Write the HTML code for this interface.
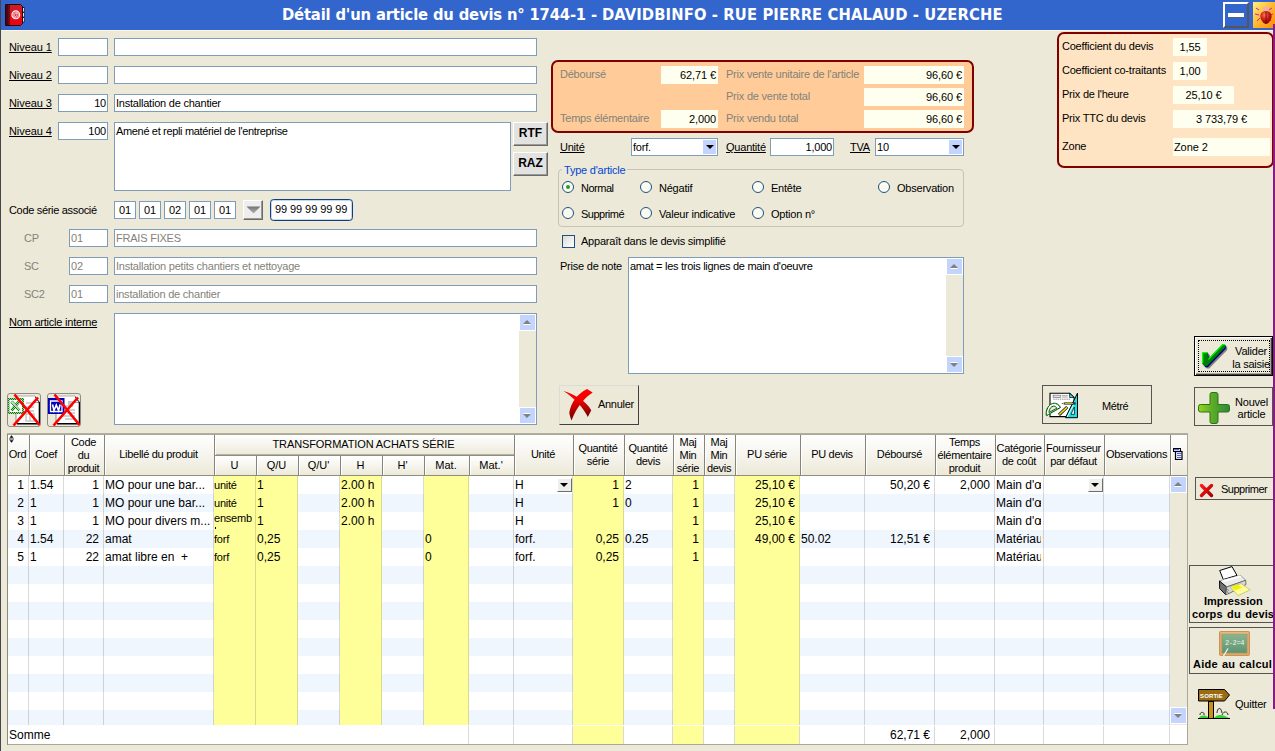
<!DOCTYPE html>
<html lang="fr"><head><meta charset="utf-8"><title>Détail d'un article du devis</title>
<style>
html,body{margin:0;padding:0}
body{width:1275px;height:751px;overflow:hidden;position:relative;background:#ECE9D8;font-family:"Liberation Sans",sans-serif;font-size:11px;letter-spacing:-0.22px;color:#000}
div,span,i,b,svg{position:absolute;box-sizing:border-box}
span.t{white-space:nowrap;line-height:13px}
.u{text-decoration:underline}
.g{color:#84827a}
#tb{left:0;top:0;width:1275px;height:30px;background:#3366CC}
#tb2{left:1px;top:30px;width:1274px;height:1px;background:#FBF8E6}
#tt{left:282px;top:0;color:#fff;font-family:"DejaVu Sans Condensed","DejaVu Sans","Liberation Sans",sans-serif;font-weight:bold;font-size:16.4px;letter-spacing:-0.15px;line-height:29px;white-space:nowrap}
#tt b{position:static;letter-spacing:0.13px}
#lb{left:0;top:0;width:1px;height:751px;background:#45464a}
#pl{left:1273px;top:24px;width:2px;height:685px;background:#8B1A89}
.in{border:1px solid #7F9DB9;background:#fff;height:18px;line-height:16px;padding:0 1px;white-space:nowrap;overflow:hidden}
.in.r{text-align:right}
.in.g{color:#84827a}
.ta{border:1px solid #7F9DB9;background:#fff;padding:1px 1px;line-height:14px;white-space:nowrap;overflow:hidden}
.btn{border:1px solid #fff;border-right-color:#404040;border-bottom-color:#404040;background:#ECE9D8;box-shadow:inset -1px -1px 0 #ACA899}
.btn.gb{background:#E2E2E0;border-right-color:#6a6a6a;border-bottom-color:#6a6a6a;box-shadow:inset -1px -1px 0 #9a9a96}
.fb{border:1px solid #55554f;background:#ECE9D8}
.pn{border:2px solid #800000;border-radius:7px}
.iv{background:#FFFFF0;height:18px;line-height:19px;text-align:right;padding:0 2px;font-size:11px;letter-spacing:-0.1px;white-space:nowrap}
.rd{width:12px;height:12px;border-radius:50%;border:1px solid #1C5180;background:#FBFBF2}
.rd.on:after{content:"";position:absolute;left:3px;top:3px;width:4px;height:4px;border-radius:50%;background:#21A121}
.sb{background:#ECE9D8}
.sa{background:#fff;width:17px;height:17px}
.sa:before{content:"";position:absolute;left:1px;top:1px;width:15px;height:15px;background:#C3D5FD}
.sa i{left:4px;width:0;height:0;border:4px solid transparent}
.sa i.up{top:6px;border-bottom:4.5px solid #808080;border-top:0;filter:drop-shadow(0 1px 0 #fff)}
.sa i.dn{top:7px;border-top:4.5px solid #808080;border-bottom:0;filter:drop-shadow(0 -1px 0 #fff)}
/* grid */
#grid{left:8px;top:434px;width:1180px;height:311px;background:#fff;border-right:1px solid #ACA899;border-bottom:1px solid #ACA899;overflow:hidden}
#gl{left:7px;top:434px;width:1px;height:311px;background:#8e8b7c}
#grid:before{content:"";position:absolute;left:0;top:0;width:100%;height:1px;background:#aaa796;z-index:5}
#gt{left:7px;top:433px;width:1181px;height:1px;background:#b3b09f}
.rw{left:0;width:1162px;background:#fff}
.rb{left:0;width:1162px;background:#EFF6FD}
.yc{top:42px;height:249px;background:#FFFF99}
.yc2{top:292px;height:18px;background:#FFFF99}
.vl{top:42px;width:1px;height:249px;background:rgba(120,120,120,.28)}
.vl2{top:292px;width:1px;height:18px;background:rgba(120,120,120,.28)}
.sumrow{left:0;top:291px;width:1179px;height:19px;background:#fff}
.hc{top:0;background:linear-gradient(#fff 0%,#F7F6F0 45%,#ECE9D8 100%);border-right:1px solid #85857c;border-bottom:1px solid #8e8d82;box-shadow:inset 1px 1px 0 #fff}
.hc span{left:-1px;right:1px;letter-spacing:-0.3px;text-align:center;line-height:13px;white-space:nowrap}
.ico{display:block}
.c{font-size:12px;letter-spacing:0;line-height:18px;height:18px;padding:0 1px;white-space:nowrap;overflow:hidden}
.c.r{text-align:right;padding-right:4px}
.c.s{font-size:11px;letter-spacing:-0.22px;padding-left:0}
.cb{width:15px;height:14px;background:#EEEEEC;border:1px solid #fff;border-right-color:#6e6e6e;border-bottom-color:#6e6e6e}
.cb i{left:2px;top:4px;width:0;height:0;border:4.5px solid transparent;border-top:4.5px solid #000;border-bottom:0}
.sbt{background:#ECE9D8}
.sbb{width:17px;height:17px;background:#fff}
.sbb:before{content:"";position:absolute;left:1px;top:1px;width:15px;height:15px;background:#C3D5FD}
.sbb i{left:4px;width:0;height:0;border:4px solid transparent}
.sbb i.up{top:6px;border-bottom:4.5px solid #808080;border-top:0;filter:drop-shadow(0 1px 0 #fff)}
.sbb i.dn{top:7px;border-top:4.5px solid #808080;border-bottom:0;filter:drop-shadow(0 -1px 0 #fff)}
.bt{font-weight:bold;font-size:11px;letter-spacing:0;text-align:center;white-space:nowrap;line-height:13px}

.ca{right:1px;top:1px;width:13px;height:14px;background:#C3D5FD}
.ca i{left:2.5px;top:4.5px;width:0;height:0;border:4px solid transparent;border-top:4.5px solid #000;border-bottom:0}

</style></head>
<body>
<div id="tb"></div><div id="tb2"></div>
<div id="tt">Détail d'un article du devis n° 1744-1 - <b>DAVIDBINFO - RUE PIERRE CHALAUD - UZERCHE</b></div>
<div id="lb"></div>
<!-- title icon -->
<svg style="left:5px;top:4px" width="20" height="22" viewBox="0 0 20 22">
<defs><linearGradient id="bk" x1="0" y1="0" x2="0" y2="1"><stop offset="0" stop-color="#c8202a"/><stop offset="1" stop-color="#f00010"/></linearGradient></defs>
<rect x="17" y="3" width="2.500" height="15.500" fill="#1a1a30"/>
<rect x="17" y="4" width="2" height="3.600" fill="#e6e0dc"/><rect x="17" y="9" width="2" height="3.600" fill="#e6e0dc"/><rect x="17" y="14" width="2" height="3.600" fill="#e6e0dc"/>
<path d="M.500 .500H15.500L17.500 2.500V19.500L15.500 21.500H.500Z" fill="url(#bk)" stroke="#2a0508" stroke-width="1"/>
<rect x="1" y="1" width="4" height="20" fill="#4a060c"/><rect x="3" y="1" width="2" height="20" fill="#6c0a12"/>
<circle cx="10.800" cy="10.800" r="3.900" fill="none" stroke="#fff" stroke-width="1.100"/>
<text x="10.800" y="13.300" font-family="Liberation Sans,sans-serif" font-size="7" font-weight="bold" fill="#fff" text-anchor="middle">@</text>
</svg>
<!-- minimize -->
<div style="left:1223px;top:2px;width:26px;height:26px;border:2px solid #fff;border-right-color:#55555a;border-bottom-color:#55555a;background:#3366CC"><div style="left:3px;top:9px;width:16px;height:4px;background:#fff;box-shadow:0 1px 0 #55607a"></div></div>
<!-- bug -->
<svg style="left:1253px;top:2px" width="22" height="26" viewBox="0 0 22 26">
<defs><linearGradient id="bg1" x1="0" y1="0" x2="1" y2="1"><stop offset="0" stop-color="#FFF080"/><stop offset="0.5" stop-color="#FFB830"/><stop offset="1" stop-color="#FF8A00"/></linearGradient>
<radialGradient id="bg2" cx="0.4" cy="0.3" r="0.8"><stop offset="0" stop-color="#ff7a60"/><stop offset="0.5" stop-color="#c81810"/><stop offset="1" stop-color="#6a0000"/></radialGradient></defs>
<rect width="22" height="26" fill="url(#bg1)"/>
<path d="M3 6l3 2M2 12l4 1M4 19l3-3M19 6l-3 2M20 12l-3 1M18 19l-2-3" stroke="#c020c0" stroke-width="1" fill="none"/>
<ellipse cx="13" cy="7.5" rx="3" ry="3" fill="#f0b0a8"/>
<path d="M13 9 C7 9 6 15 9 19 C11 22 12 22 13 22 C14 22 16 21 17.5 18 C20 14 18 9 13 9Z" fill="url(#bg2)"/>
<path d="M13 10v11" stroke="#5a0000" stroke-width="0.8"/>
</svg>

<!-- left form -->
<span class="t u" style="left:9px;top:41px;letter-spacing:-0.08px">Niveau 1</span>
<div class="in" style="left:58px;top:38px;width:50px"></div>
<div class="in" style="left:114px;top:38px;width:423px"></div>
<span class="t u" style="left:9px;top:69px;letter-spacing:-0.08px">Niveau 2</span>
<div class="in" style="left:58px;top:66px;width:50px"></div>
<div class="in" style="left:114px;top:66px;width:423px"></div>
<span class="t u" style="left:9px;top:97px;letter-spacing:-0.08px">Niveau 3</span>
<div class="in r" style="left:58px;top:94px;width:50px">10</div>
<div class="in" style="left:114px;top:94px;width:423px">Installation de chantier</div>
<span class="t u" style="left:9px;top:125px;letter-spacing:-0.08px">Niveau 4</span>
<div class="in r" style="left:58px;top:122px;width:50px">100</div>
<div class="ta" style="left:114px;top:122px;width:397px;height:69px;letter-spacing:-0.34px">Amené et repli matériel de l'entreprise</div>
<div class="btn gb" style="left:513px;top:122px;width:35px;height:24px"><span class="bt" style="left:0;right:0;top:3px;font-size:12px;line-height:15px">RTF</span></div>
<div class="btn gb" style="left:513px;top:152px;width:35px;height:24px"><span class="bt" style="left:0;right:0;top:3px;font-size:12px;line-height:15px">RAZ</span></div>

<span class="t" style="left:9px;top:204px;letter-spacing:-0.32px">Code série associé</span>
<div class="in" style="left:114px;top:201px;width:22px;padding:0;text-align:center">01</div>
<div class="in" style="left:139px;top:201px;width:22px;padding:0;text-align:center">01</div>
<div class="in" style="left:164px;top:201px;width:22px;padding:0;text-align:center">02</div>
<div class="in" style="left:189px;top:201px;width:22px;padding:0;text-align:center">01</div>
<div class="in" style="left:214px;top:201px;width:22px;padding:0;text-align:center">01</div>
<div class="btn gb" style="left:243px;top:200px;width:20px;height:20px;background:#EEEEEE"><svg style="left:2px;top:5px" width="15" height="8" viewBox="0 0 15 8"><defs><linearGradient id="ag" x1="0" y1="0" x2="0" y2="1"><stop offset="0" stop-color="#737373"/><stop offset="1" stop-color="#b4b4b4"/></linearGradient></defs><path d="M.500 .500h14L7.500 7.500z" fill="url(#ag)"/></svg></div>
<div style="left:270px;top:199px;width:83px;height:22px;border:1px solid #0F3F7C;border-radius:3.500px;background:#fff;box-shadow:inset 0 0 0 1px #c9d6ea"><span class="t" style="left:4px;top:3px;letter-spacing:-0.08px">99 99 99 99 99</span></div>

<span class="t g" style="left:24px;top:232px">CP</span>
<div class="in g" style="left:69px;top:229px;width:39px;padding:0 1px">01</div>
<div class="in g" style="left:114px;top:229px;width:423px;padding:0 1px">FRAIS FIXES</div>
<span class="t g" style="left:24px;top:260px">SC</span>
<div class="in g" style="left:69px;top:257px;width:39px;padding:0 1px">02</div>
<div class="in g" style="left:114px;top:257px;width:423px;padding:0 1px">Installation petits chantiers et nettoyage</div>
<span class="t g" style="left:24px;top:288px">SC2</span>
<div class="in g" style="left:69px;top:285px;width:39px;padding:0 1px">01</div>
<div class="in g" style="left:114px;top:285px;width:423px;padding:0 1px">installation de chantier</div>

<span class="t u" style="left:9px;top:316px">Nom article interne</span>
<div class="ta" style="left:114px;top:313px;width:423px;height:112px">
 <div class="sb" style="left:404px;top:0;width:17px;height:110px"></div>
 <div class="sa" style="left:404px;top:0"><i class="up"></i></div>
 <div class="sa" style="left:404px;top:93px"><i class="dn"></i></div>
</div>

<!-- excel / word buttons -->
<div style="left:7px;top:393px;width:34px;height:34px;border:1px solid #8c8c8c;border-radius:3px;overflow:hidden">
<svg style="left:-1px;top:-1px" width="34" height="34" viewBox="0 0 34 34">
<defs><pattern id="dg" width="2" height="2" patternUnits="userSpaceOnUse"><rect width="2" height="2" fill="#a8d0a8"/><rect width="1" height="1" fill="#008000"/><rect x="1" y="1" width="1" height="1" fill="#008000"/></pattern>
<pattern id="db" width="2" height="2" patternUnits="userSpaceOnUse"><rect width="2" height="2" fill="#0000FF"/><rect width="1" height="1" fill="#000070"/><rect x="1" y="1" width="1" height="1" fill="#000070"/></pattern></defs>
<path d="M9 3h19.500l4.500 5.500V31H9z" fill="#fff"/><path d="M9 3V31" stroke="#8a8a8a"/><path d="M9 3h19" stroke="#b0b0b0"/>
<path d="M10 30.700H33M32.500 9V31.500" stroke="#000" stroke-width="1.600"/><path d="M28 3l5 6.500h-5z" fill="#000"/><path d="M28 4.500v4.500h3.500" fill="#fff" stroke="#fff" stroke-width=".5"/>
<path d="M19 10h6M19 14h8M19 18h8M19 21h8v7h-8zM23 21v7" stroke="#c4c4c4" stroke-width="1.400" fill="none"/>
<rect x=".500" y="5" width="16.500" height="16" fill="url(#dg)"/><rect x="2.500" y="7" width="12.500" height="12" fill="#fff"/>
<path d="M4.500 8.500l8 9M12 8.500l-7.500 9" stroke="url(#dg)" stroke-width="3"/><path d="M5 9l7.500 8" stroke="#fff" stroke-width=".8"/>
<path d="M7.500 1.500L33 32.500M31 4.500L6.500 32.500" stroke="#FF0000" stroke-width="2.600"/>
</svg></div>
<div style="left:47px;top:393px;width:34px;height:34px;border:1px solid #8c8c8c;border-radius:3px;overflow:hidden">
<svg style="left:-1px;top:-1px" width="34" height="34" viewBox="0 0 34 34">
<path d="M9 3h19.500l4.500 5.500V31H9z" fill="#fff"/><path d="M9 3V31" stroke="#8a8a8a"/><path d="M9 3h19" stroke="#b0b0b0"/>
<path d="M10 30.700H33M32.500 9V31.500" stroke="#000" stroke-width="1.600"/><path d="M28 3l5 6.500h-5z" fill="#000"/><path d="M28 4.500v4.500h3.500" fill="#fff" stroke="#fff" stroke-width=".5"/>
<path d="M21 8h5v6h-5z" fill="#c4c4c4"/><path d="M17 13h4M20 17h8M20 20h8M14 23h14M18 26h10" stroke="#c4c4c4" stroke-width="1.300" fill="none"/>
<rect x="1" y="5" width="16.500" height="16" fill="url(#db)"/>
<path d="M3.500 8h11.500v10.500H3.500z" fill="none" stroke="#fff" stroke-width="1.300"/><path d="M5.500 11.500l1.500 6 2.300-5.500 2.300 5.500 1.500-6" fill="none" stroke="#fff" stroke-width="1.600"/>
<path d="M7.500 1.500L33 32.500M31 4.500L6.500 32.500" stroke="#FF0000" stroke-width="2.600"/>
</svg></div>

<!-- orange panel -->
<div class="pn" style="left:551px;top:60px;width:423px;height:73px;background:#FFCC99"></div>
<span class="t g" style="left:560px;top:68px">Déboursé</span>
<div class="iv" style="left:661px;top:66px;width:57px">62,71 €</div>
<span class="t g" style="left:726px;top:68px">Prix vente unitaire de l'article</span>
<div class="iv" style="left:864px;top:66px;width:100px">96,60 €</div>
<span class="t g" style="left:726px;top:90px">Prix de vente total</span>
<div class="iv" style="left:864px;top:88px;width:100px">96,60 €</div>
<span class="t g" style="left:560px;top:112px">Temps élémentaire</span>
<div class="iv" style="left:661px;top:110px;width:57px">2,000</div>
<span class="t g" style="left:726px;top:112px">Prix vendu total</span>
<div class="iv" style="left:864px;top:110px;width:100px">96,60 €</div>

<span class="t u" style="left:560px;top:141px">Unité</span>
<div class="in" style="left:631px;top:138px;width:87px">forf.<div class="ca"><i></i></div></div>
<span class="t u" style="left:726px;top:141px">Quantité</span>
<div class="in r" style="left:770px;top:138px;width:64px;padding-right:1px">1,000</div>
<span class="t u" style="left:850px;top:141px">TVA</span>
<div class="in" style="left:875px;top:138px;width:89px">10<div class="ca"><i></i></div></div>

<div style="left:558px;top:169px;width:406px;height:58px;border:1px solid #C6C4B2;border-radius:4px"></div>
<span class="t" style="left:562px;top:164px;padding:0 2px;background:#ECE9D8;color:#0046D5">Type d'article</span>
<div class="rd on" style="left:562px;top:181px"></div><span class="t" style="left:581px;top:182px;letter-spacing:-0.5px">Normal</span>
<div class="rd" style="left:640px;top:181px"></div><span class="t" style="left:659px;top:182px">Négatif</span>
<div class="rd" style="left:752px;top:181px"></div><span class="t" style="left:771px;top:182px">Entête</span>
<div class="rd" style="left:878px;top:181px"></div><span class="t" style="left:897px;top:182px">Observation</span>
<div class="rd" style="left:562px;top:207px"></div><span class="t" style="left:581px;top:208px;letter-spacing:-0.5px">Supprimé</span>
<div class="rd" style="left:640px;top:207px"></div><span class="t" style="left:659px;top:208px">Valeur indicative</span>
<div class="rd" style="left:752px;top:207px"></div><span class="t" style="left:771px;top:208px">Option n°</span>

<div style="left:562px;top:235px;width:13px;height:13px;border:1px solid #1C5180;background:linear-gradient(135deg,#DCDCD4,#fff)"></div>
<span class="t" style="left:581px;top:235px">Apparaît dans le devis simplifié</span>

<span class="t" style="left:560px;top:260px">Prise de note</span>
<div class="ta" style="left:628px;top:257px;width:336px;height:117px"><span style="position:static;letter-spacing:-0.28px">amat = les trois lignes de main d'oeuvre</span>
 <div class="sb" style="left:317px;top:0;width:17px;height:115px"></div>
 <div class="sa" style="left:317px;top:0"><i class="up"></i></div>
 <div class="sa" style="left:317px;top:98px"><i class="dn"></i></div>
</div>

<!-- Annuler -->
<div class="btn" style="left:559px;top:385px;width:80px;height:40px;box-shadow:none;border-left-color:#dcdcd6;border-top-color:#dcdcd6">
<svg style="left:2px;top:2px" width="32" height="34" viewBox="0 0 32 34"><defs><linearGradient id="rx" x1="0" y1="0" x2="0" y2="1"><stop offset="0" stop-color="#ff0000"/><stop offset="0.35" stop-color="#f00000"/><stop offset="1" stop-color="#700000"/></linearGradient></defs>
<path d="M1.400 3C12 6 24 13 29.300 22.200L25.800 29C22 21 13 10 1.400 3Z" fill="url(#rx)"/>
<path d="M25 1L30.700 4.600C22 10 15 19 9.500 32.500C8 28 7 25 7.400 24C9 15 15 6 25 1Z" fill="url(#rx)"/></svg>
<span class="t" style="left:38px;top:12px;letter-spacing:-0.3px">Annuler</span></div>

<!-- coef panel -->
<div class="pn" style="left:1057px;top:32px;width:217px;height:136px;background:#FFE4C4"></div>
<span class="t" style="left:1062px;top:40px">Coefficient du devis</span>
<div class="iv" style="left:1173px;top:38px;width:34px;text-align:center">1,55</div>
<span class="t" style="left:1062px;top:64px">Coefficient co-traitants</span>
<div class="iv" style="left:1173px;top:62px;width:34px;text-align:center">1,00</div>
<span class="t" style="left:1062px;top:88px">Prix de l'heure</span>
<div class="iv" style="left:1173px;top:86px;width:61px;text-align:center">25,10 €</div>
<span class="t" style="left:1062px;top:112px">Prix TTC du devis</span>
<div class="iv" style="left:1173px;top:110px;width:97px;text-align:center">3 733,79 €</div>
<span class="t" style="left:1062px;top:140px">Zone</span>
<div class="iv" style="left:1173px;top:138px;width:97px;text-align:left;padding-left:1px">Zone 2</div>
<div id="gl"></div><div id="gt"></div>
<div id="grid">
<div class="rw" style="top:42px;height:18px"></div>
<div class="rb" style="top:60px;height:18px"></div>
<div class="rw" style="top:78px;height:18px"></div>
<div class="rb" style="top:96px;height:18px"></div>
<div class="rw" style="top:114px;height:18px"></div>
<div class="rb" style="top:132px;height:18px"></div>
<div class="rw" style="top:150px;height:18px"></div>
<div class="rb" style="top:168px;height:18px"></div>
<div class="rw" style="top:186px;height:18px"></div>
<div class="rb" style="top:204px;height:18px"></div>
<div class="rw" style="top:222px;height:18px"></div>
<div class="rb" style="top:240px;height:18px"></div>
<div class="rw" style="top:258px;height:18px"></div>
<div class="rb" style="top:276px;height:15px"></div>
<div class="yc" style="left:206px;width:42px"></div>
<div class="yc" style="left:248px;width:42px"></div>
<div class="yc" style="left:332px;width:42px"></div>
<div class="yc" style="left:416px;width:45px"></div>
<div class="yc" style="left:565px;width:51px"></div>
<div class="yc" style="left:665px;width:31px"></div>
<div class="yc" style="left:727px;width:65px"></div>
<div class="vl" style="left:20px"></div>
<div class="vl" style="left:55px"></div>
<div class="vl" style="left:95px"></div>
<div class="vl" style="left:205px"></div>
<div class="vl" style="left:247px"></div>
<div class="vl" style="left:289px"></div>
<div class="vl" style="left:331px"></div>
<div class="vl" style="left:373px"></div>
<div class="vl" style="left:415px"></div>
<div class="vl" style="left:460px"></div>
<div class="vl" style="left:505px"></div>
<div class="vl" style="left:564px"></div>
<div class="vl" style="left:615px"></div>
<div class="vl" style="left:664px"></div>
<div class="vl" style="left:695px"></div>
<div class="vl" style="left:726px"></div>
<div class="vl" style="left:791px"></div>
<div class="vl" style="left:856px"></div>
<div class="vl" style="left:926px"></div>
<div class="vl" style="left:986px"></div>
<div class="vl" style="left:1035px"></div>
<div class="vl" style="left:1095px"></div>
<div class="vl" style="left:1161px"></div>
<div class="hc" style="left:0px;width:22px;height:42px"><span style="top:14px">Ord</span></div>
<div class="hc" style="left:22px;width:35px;height:42px"><span style="top:14px">Coef</span></div>
<div class="hc" style="left:57px;width:40px;height:42px"><span style="top:2px">Code<br>du<br>produit</span></div>
<div class="hc" style="left:97px;width:110px;height:42px"><span style="top:14px">Libellé du produit</span></div>
<div class="hc" style="left:507px;width:59px;height:42px"><span style="top:14px">Unité</span></div>
<div class="hc" style="left:566px;width:51px;height:42px"><span style="top:8px">Quantité<br>série</span></div>
<div class="hc" style="left:617px;width:49px;height:42px"><span style="top:8px">Quantité<br>devis</span></div>
<div class="hc" style="left:666px;width:31px;height:42px"><span style="top:2px">Maj<br>Min<br>série</span></div>
<div class="hc" style="left:697px;width:31px;height:42px"><span style="top:2px">Maj<br>Min<br>devis</span></div>
<div class="hc" style="left:728px;width:65px;height:42px"><span style="top:14px">PU série</span></div>
<div class="hc" style="left:793px;width:65px;height:42px"><span style="top:14px">PU devis</span></div>
<div class="hc" style="left:858px;width:70px;height:42px"><span style="top:14px">Déboursé</span></div>
<div class="hc" style="left:928px;width:60px;height:42px"><span style="top:2px">Temps<br>élémentaire<br>produit</span></div>
<div class="hc" style="left:988px;width:49px;height:42px"><span style="top:8px">Catégorie<br>de coût</span></div>
<div class="hc" style="left:1037px;width:60px;height:42px"><span style="top:8px">Fournisseur<br>par défaut</span></div>
<div class="hc" style="left:1097px;width:66px;height:42px"><span style="top:14px">Observations</span></div>
<div class="hc" style="left:1163px;width:17px;height:42px"><span style="top:14px"></span></div>
<div class="hc" style="left:207px;width:300px;height:22px;box-shadow:inset 1px 1px 0 #fff,inset 0 -1px 0 #b4b2a2"><span style="top:4px;letter-spacing:-0.1px">TRANSFORMATION ACHATS SÉRIE</span></div>
<div class="hc" style="left:207px;top:22px;width:42px;height:20px"><span style="top:3px;letter-spacing:0">U</span></div>
<div class="hc" style="left:249px;top:22px;width:42px;height:20px"><span style="top:3px;letter-spacing:0">Q/U</span></div>
<div class="hc" style="left:291px;top:22px;width:42px;height:20px"><span style="top:3px;letter-spacing:0">Q/U'</span></div>
<div class="hc" style="left:333px;top:22px;width:42px;height:20px"><span style="top:3px;letter-spacing:0">H</span></div>
<div class="hc" style="left:375px;top:22px;width:42px;height:20px"><span style="top:3px;letter-spacing:0">H'</span></div>
<div class="hc" style="left:417px;top:22px;width:45px;height:20px"><span style="top:3px;letter-spacing:0">Mat.</span></div>
<div class="hc" style="left:462px;top:22px;width:45px;height:20px"><span style="top:3px;letter-spacing:0">Mat.'</span></div>
<svg class="ico" style="left:1px;top:1px;z-index:6" width="5" height="8" viewBox="0 0 5 8"><path d="M.5 2.800L2.500 .200L4.500 2.800ZM.500 5.200h4L2.500 7.800Z" fill="#000"/><rect x="0" y="3.600" width="5" height=".800" fill="#000"/></svg>
<svg class="ico" style="left:1165px;top:14px" width="10" height="12" viewBox="0 0 10 12"><rect x=".5" y=".5" width="7" height="3" fill="#dfe4ff" stroke="#000"/><path d="M1 1.500h5" stroke="#5566dd"/><rect x="2.500" y="3.500" width="6.500" height="8" fill="#eef0ff" stroke="#000" stroke-width="1.200"/><path d="M4 5.500h4M4 7.500h4M4 9.500h4" stroke="#5060d8" stroke-width="1"/></svg>
<div class="c r" style="left:0px;top:42px;width:20px">1</div>
<div class="c" style="left:21px;top:42px;width:34px">1.54</div>
<div class="c r" style="left:56px;top:42px;width:39px">1</div>
<div class="c" style="left:96px;top:42px;width:109px">MO pour une bar...</div>
<div class="c s" style="left:206px;top:42px;width:41px">unité</div>
<div class="c" style="left:248px;top:42px;width:41px">1</div>
<div class="c" style="left:332px;top:42px;width:41px">2.00 h</div>
<div class="c" style="left:506px;top:42px;width:58px">H</div>
<div class="c r" style="left:565px;top:42px;width:50px">1</div>
<div class="c" style="left:616px;top:42px;width:48px">2</div>
<div class="c r" style="left:665px;top:42px;width:30px">1</div>
<div class="c r" style="left:727px;top:42px;width:64px">25,10 €</div>
<div class="c r" style="left:857px;top:42px;width:69px">50,20 €</div>
<div class="c r" style="left:927px;top:42px;width:59px">2,000</div>
<div class="c" style="left:987px;top:42px;width:46px">Main d'œuvre</div>
<div class="c r" style="left:0px;top:60px;width:20px">2</div>
<div class="c" style="left:21px;top:60px;width:34px">1</div>
<div class="c r" style="left:56px;top:60px;width:39px">1</div>
<div class="c" style="left:96px;top:60px;width:109px">MO pour une bar...</div>
<div class="c s" style="left:206px;top:60px;width:41px">unité</div>
<div class="c" style="left:248px;top:60px;width:41px">1</div>
<div class="c" style="left:332px;top:60px;width:41px">2.00 h</div>
<div class="c" style="left:506px;top:60px;width:58px">H</div>
<div class="c r" style="left:565px;top:60px;width:50px">1</div>
<div class="c" style="left:616px;top:60px;width:48px">0</div>
<div class="c r" style="left:665px;top:60px;width:30px">1</div>
<div class="c r" style="left:727px;top:60px;width:64px">25,10 €</div>
<div class="c" style="left:987px;top:60px;width:46px">Main d'œuvre</div>
<div class="c r" style="left:0px;top:78px;width:20px">3</div>
<div class="c" style="left:21px;top:78px;width:34px">1</div>
<div class="c r" style="left:56px;top:78px;width:39px">1</div>
<div class="c" style="left:96px;top:78px;width:109px">MO pour divers m...</div>
<div class="c s" style="left:206px;top:78px;width:41px;top:78px;line-height:13px">ensemb</div>
<div class="c" style="left:248px;top:78px;width:41px">1</div>
<div class="c" style="left:332px;top:78px;width:41px">2.00 h</div>
<div class="c" style="left:506px;top:78px;width:58px">H</div>
<div class="c r" style="left:665px;top:78px;width:30px">1</div>
<div class="c r" style="left:727px;top:78px;width:64px">25,10 €</div>
<div class="c" style="left:987px;top:78px;width:46px">Main d'œuvre</div>
<div class="c r" style="left:0px;top:96px;width:20px">4</div>
<div class="c" style="left:21px;top:96px;width:34px">1.54</div>
<div class="c r" style="left:56px;top:96px;width:39px">22</div>
<div class="c" style="left:96px;top:96px;width:109px">amat</div>
<div class="c s" style="left:206px;top:96px;width:41px">forf</div>
<div class="c" style="left:248px;top:96px;width:41px">0,25</div>
<div class="c" style="left:416px;top:96px;width:44px">0</div>
<div class="c" style="left:506px;top:96px;width:58px">forf.</div>
<div class="c r" style="left:565px;top:96px;width:50px">0,25</div>
<div class="c" style="left:616px;top:96px;width:48px">0.25</div>
<div class="c r" style="left:665px;top:96px;width:30px">1</div>
<div class="c r" style="left:727px;top:96px;width:64px">49,00 €</div>
<div class="c" style="left:792px;top:96px;width:64px">50.02</div>
<div class="c r" style="left:857px;top:96px;width:69px">12,51 €</div>
<div class="c" style="left:987px;top:96px;width:46px">Matériaux</div>
<div class="c r" style="left:0px;top:114px;width:20px">5</div>
<div class="c" style="left:21px;top:114px;width:34px">1</div>
<div class="c r" style="left:56px;top:114px;width:39px">22</div>
<div class="c" style="left:96px;top:114px;width:109px">amat libre en &nbsp;+</div>
<div class="c s" style="left:206px;top:114px;width:41px">forf</div>
<div class="c" style="left:248px;top:114px;width:41px">0,25</div>
<div class="c" style="left:416px;top:114px;width:44px">0</div>
<div class="c" style="left:506px;top:114px;width:58px">forf.</div>
<div class="c r" style="left:565px;top:114px;width:50px">0,25</div>
<div class="c r" style="left:665px;top:114px;width:30px">1</div>
<div class="c" style="left:987px;top:114px;width:46px">Matériaux</div>
<div style="position:absolute;left:207px;top:93px;width:1px;height:2px;background:#000"></div>
<div class="cb" style="left:549px;top:44px"><i></i></div>
<div class="cb" style="left:1080px;top:44px"><i></i></div>
<div class="sbt" style="left:1162px;top:42px;width:17px;height:249px"></div>
<div class="sbb" style="left:1162px;top:42px"><i class="up"></i></div>
<div class="sbb" style="left:1162px;top:273px"><i class="dn"></i></div>
<div class="sumrow"></div>
<div class="vl2" style="left:460px"></div>
<div class="vl2" style="left:505px"></div>
<div class="vl2" style="left:564px"></div>
<div class="vl2" style="left:615px"></div>
<div class="vl2" style="left:664px"></div>
<div class="vl2" style="left:695px"></div>
<div class="vl2" style="left:726px"></div>
<div class="vl2" style="left:791px"></div>
<div class="vl2" style="left:856px"></div>
<div class="vl2" style="left:926px"></div>
<div class="vl2" style="left:986px"></div>
<div class="vl2" style="left:1035px"></div>
<div class="vl2" style="left:1095px"></div>
<div class="vl2" style="left:1161px"></div>
<div class="yc2" style="left:565px;width:50px"></div>
<div class="yc2" style="left:665px;width:30px"></div>
<div class="yc2" style="left:727px;width:64px"></div>
<div class="c" style="left:0px;top:292px;width:100px;line-height:18px">Somme</div>
<div class="c r" style="left:857px;top:292px;width:69px;line-height:18px">62,71 €</div>
<div class="c r" style="left:927px;top:292px;width:59px;line-height:18px">2,000</div>
</div>
<!-- right buttons -->
<div style="left:1194px;top:336px;width:79px;height:40px;border:1px solid #000;background:#ECE9D8;box-shadow:inset 1px 1px 0 #fff,inset -1px -1px 0 #404040,inset -2px -2px 0 #ACA899">
 <div style="left:3px;top:3px;right:2px;bottom:3px;border:1px dotted #000"></div>
 <svg style="left:5px;top:5px" width="30" height="30" viewBox="0 0 30 30">
 <path d="M2 11L3 10L7.500 10L8 17L22.500 2L25 2L25 5.500L7 24L4.500 24L2 21Z" fill="#808080" transform="translate(2.200,2.600)"/>
 <path d="M2 11L3 10L7.500 10L8 17L22.500 2L25 2L25 5.500L7 24L4.500 24L2 21Z" fill="#000080" transform="translate(0.800,1.300)"/>
 <path d="M2 11L3 10L7.500 10L8 17L22.500 2L25 2L25 5.500L7 24L4.500 24L2 21Z" fill="#008000"/>
 <path d="M2.600 21V11.200L3.300 10.600H7.500M8.400 17.400L22.800 2.600H25" fill="none" stroke="#00FF00" stroke-width="1.300"/>
 </svg>
 <span class="t" style="right:5px;top:8px">Valider</span><span class="t" style="right:2px;top:21px">la saisie</span>
</div>
<div class="fb" style="left:1194px;top:387px;width:79px;height:39px">
 <svg style="left:3px;top:4px" width="33" height="33" viewBox="0 0 33 33"><defs><linearGradient id="gp" x1="0" y1="0" x2="1" y2="0"><stop offset="0" stop-color="#98d420"/><stop offset="0.45" stop-color="#5cac28"/><stop offset="1" stop-color="#2c863c"/></linearGradient></defs>
 <path d="M14 .500h4a2 2 0 0 1 2 2V12.500h9.500a2 2 0 0 1 2 2v3.500a2 2 0 0 1-2 2H20v9.500a2 2 0 0 1-2 2h-4a2 2 0 0 1-2-2V20H2.500a2 2 0 0 1-2-2v-3.500a2 2 0 0 1 2-2H12V2.500a2 2 0 0 1 2-2z" fill="url(#gp)" stroke="#2a7412" stroke-width="1"/>
 </svg>
 <span class="t" style="left:34px;width:45px;text-align:center;top:8px">Nouvel</span><span class="t" style="left:34px;width:45px;text-align:center;top:20px">article</span>
</div>
<div class="fb" style="left:1042px;top:385px;width:110px;height:39px">
 <svg style="left:2px;top:6px" width="34" height="27" viewBox="0 0 34 27">
 <path d="M5 1.200H24.600L29.100 5.500V24.600H5Z" fill="#fff" stroke="#000" stroke-width="1.100"/>
 <path d="M24.600 1.200V5.500H29.100Z" fill="#30e0e8" stroke="#000" stroke-width=".7"/>
 <rect x="8.200" y="3.200" width="7.300" height="2.300" fill="#e4e4e4" stroke="#777" stroke-width=".7"/>
 <path d="M16.800 3.600h6M16.800 5.100h6" stroke="#999" stroke-width=".8"/><path d="M8.200 7.200h17" stroke="#888" stroke-width=".9" stroke-dasharray="1.500 .7"/>
 <path d="M32.500 1.100V25.700H20.500Z" fill="#18e0e8" stroke="#000" stroke-width="1"/>
 <path d="M29.400 15V22.300H26Z" fill="#fff" stroke="#000" stroke-width=".7"/>
 <path d="M22.300 24.800L29.500 11" stroke="#dff" stroke-width="1"/>
 <path d="M1.400 23.700C.5 17 4 12 8.500 11.300C11.500 11 14 12.800 15.500 15.500Z" fill="#fff" stroke="#000" stroke-width="1"/>
 <path d="M1.400 23.700C.5 17 4 12 8.500 11.300C11.500 11 14 12.800 15.500 15.500Z" fill="none" stroke="#10e020" stroke-width="1" stroke-dasharray="1.500 1.200"/>
 <path d="M4 20.500C4 17 6 14.500 8.500 14.200C10 14 11.200 15 12 16.200Z" fill="#ECE9D8" stroke="#000" stroke-width=".8"/>
 <path d="M4 20.500C4 17 6 14.500 8.500 14.200C10 14 11.200 15 12 16.200Z" fill="none" stroke="#10e020" stroke-width=".8" stroke-dasharray="1.300 1.300"/>
 <path d="M14 22.800L22.200 15" stroke="#000" stroke-width="3"/><path d="M14.300 22.500L21.900 15.300" stroke="#f4e418" stroke-width="1.600"/>
 <path d="M16.400 11.600L19.600 10.600H30.500V12.600H19.600Z" fill="#000"/><path d="M19.800 11.200H28.200V12H19.800Z" fill="#f4e418"/><path d="M28.200 11.100H30.200V12.100H28.200Z" fill="#a01010"/><path d="M17.200 11.600l2-.6v1.200z" fill="#ddd"/>
 </svg>
 <span class="t" style="left:59px;top:14px;letter-spacing:-0.4px">Métré</span>
</div>
<div class="fb" style="left:1195px;top:477px;width:82px;height:23px">
 <svg style="left:3px;top:5px" width="15" height="15" viewBox="0 0 15 15"><defs><linearGradient id="sx" x1="0" y1="0" x2="1" y2="1"><stop offset="0" stop-color="#ff1a1a"/><stop offset="1" stop-color="#a80000"/></linearGradient></defs><path d="M2.500 2.500L12.500 12.500M12.500 2.500L2.500 12.500" stroke="url(#sx)" stroke-width="3.400" stroke-linecap="round"/></svg>
 <span class="t" style="left:25px;top:5px;letter-spacing:-0.5px">Supprimer</span>
</div>
<div class="fb" style="left:1189px;top:565px;width:90px;height:58px">
 <svg style="left:29px;top:0px" width="33" height="31" viewBox="0 0 33 31">
 <path d="M.700 4.500L13 .600L18 9.400L4.300 13.500Z" fill="#fff" stroke="#000" stroke-width="1"/>
 <path d="M.500 15L21.700 9.400L26.600 14.300L7.600 21Z" fill="#ececec" stroke="#8a8a8a" stroke-width=".8"/>
 <path d="M3 14.300L21 9.600L22.500 11L5 16Z" fill="#fff"/>
 <path d="M.500 15L7.600 21L6.800 28.800L.600 22.600Z" fill="#707070" stroke="#000" stroke-width=".9"/>
 <path d="M7.600 21L26.600 14.300L27 18.500L11 27L6.800 28.800Z" fill="#d8d8d8" stroke="#555" stroke-width=".8"/>
 <path d="M8.500 23.500l1 .8M8.300 25.800l1 .8" stroke="#333" stroke-width="1"/>
 <path d="M11 21L22 17.600L31.200 23.800L19.200 29.600Z" fill="#FFFF99" stroke="#a8a860" stroke-width=".6"/>
 <path d="M12 21L19 18.800L23 21.500L16 24.500Z" fill="#f2f200"/>
 </svg>
 <span class="bt" style="left:14px;top:29px;text-align:left">Impression</span><span class="bt" style="left:2px;top:42px;text-align:left;letter-spacing:.15px;word-spacing:1.200px">corps du devis</span>
</div>
<div class="fb" style="left:1189px;top:627px;width:90px;height:47px">
 <svg style="left:29px;top:3px" width="31" height="26" viewBox="0 0 31 26"><defs><linearGradient id="cbg" x1="0" y1="0" x2="0" y2="1"><stop offset="0" stop-color="#8ab592"/><stop offset="1" stop-color="#5f9470"/></linearGradient></defs>
 <rect x=".500" y=".500" width="30" height="24" rx="1" fill="#dfa868" stroke="#c89458"/><rect x="2" y="1.500" width="27" height="1.200" fill="#f0c890"/><rect x="3" y="3" width="25" height="19" fill="url(#cbg)" stroke="#a8905c" stroke-width=".6"/>
 <text x="15.500" y="14" font-family="Liberation Mono,monospace" font-size="7" fill="#eef6ee" text-anchor="middle" letter-spacing="-.4">2-2=4</text><path d="M4.500 25L9 17.500" stroke="#f4f4f4" stroke-width="1.300"/></svg>
 <span class="bt" style="left:3px;top:30px;text-align:left;letter-spacing:.3px;word-spacing:.5px">Aide au calcul</span>
</div>
<svg style="left:1198px;top:689px" width="32" height="31" viewBox="0 0 32 31">
 <path d="M.500 .500h26l5 5.500-5 6H.500z" fill="#9a6c12" stroke="#000"/>
 <rect x="10.500" y="12.500" width="5" height="17" fill="#c89018" stroke="#000"/>
 <text x="13.500" y="8.500" font-family="Liberation Sans,sans-serif" font-size="6" font-weight="bold" fill="#fff" text-anchor="middle" letter-spacing=".1">SORTiE</text>
 <path d="M0 29.500h32" stroke="#000"/><path d="M1 29c2-3 5-3 9-1v1zM16 29c3-4 8-4 15 0z" fill="#30d030"/>
 <path d="M2 26c0-4 5-3 4 0M19 24c0-5 4-7 5 0M24 26c2-5 6-3 6 0" fill="none" stroke="#000" stroke-width=".8"/>
</svg>
<span class="t" style="left:1235px;top:698px">Quitter</span>
<div id="pl"></div>

</body></html>
